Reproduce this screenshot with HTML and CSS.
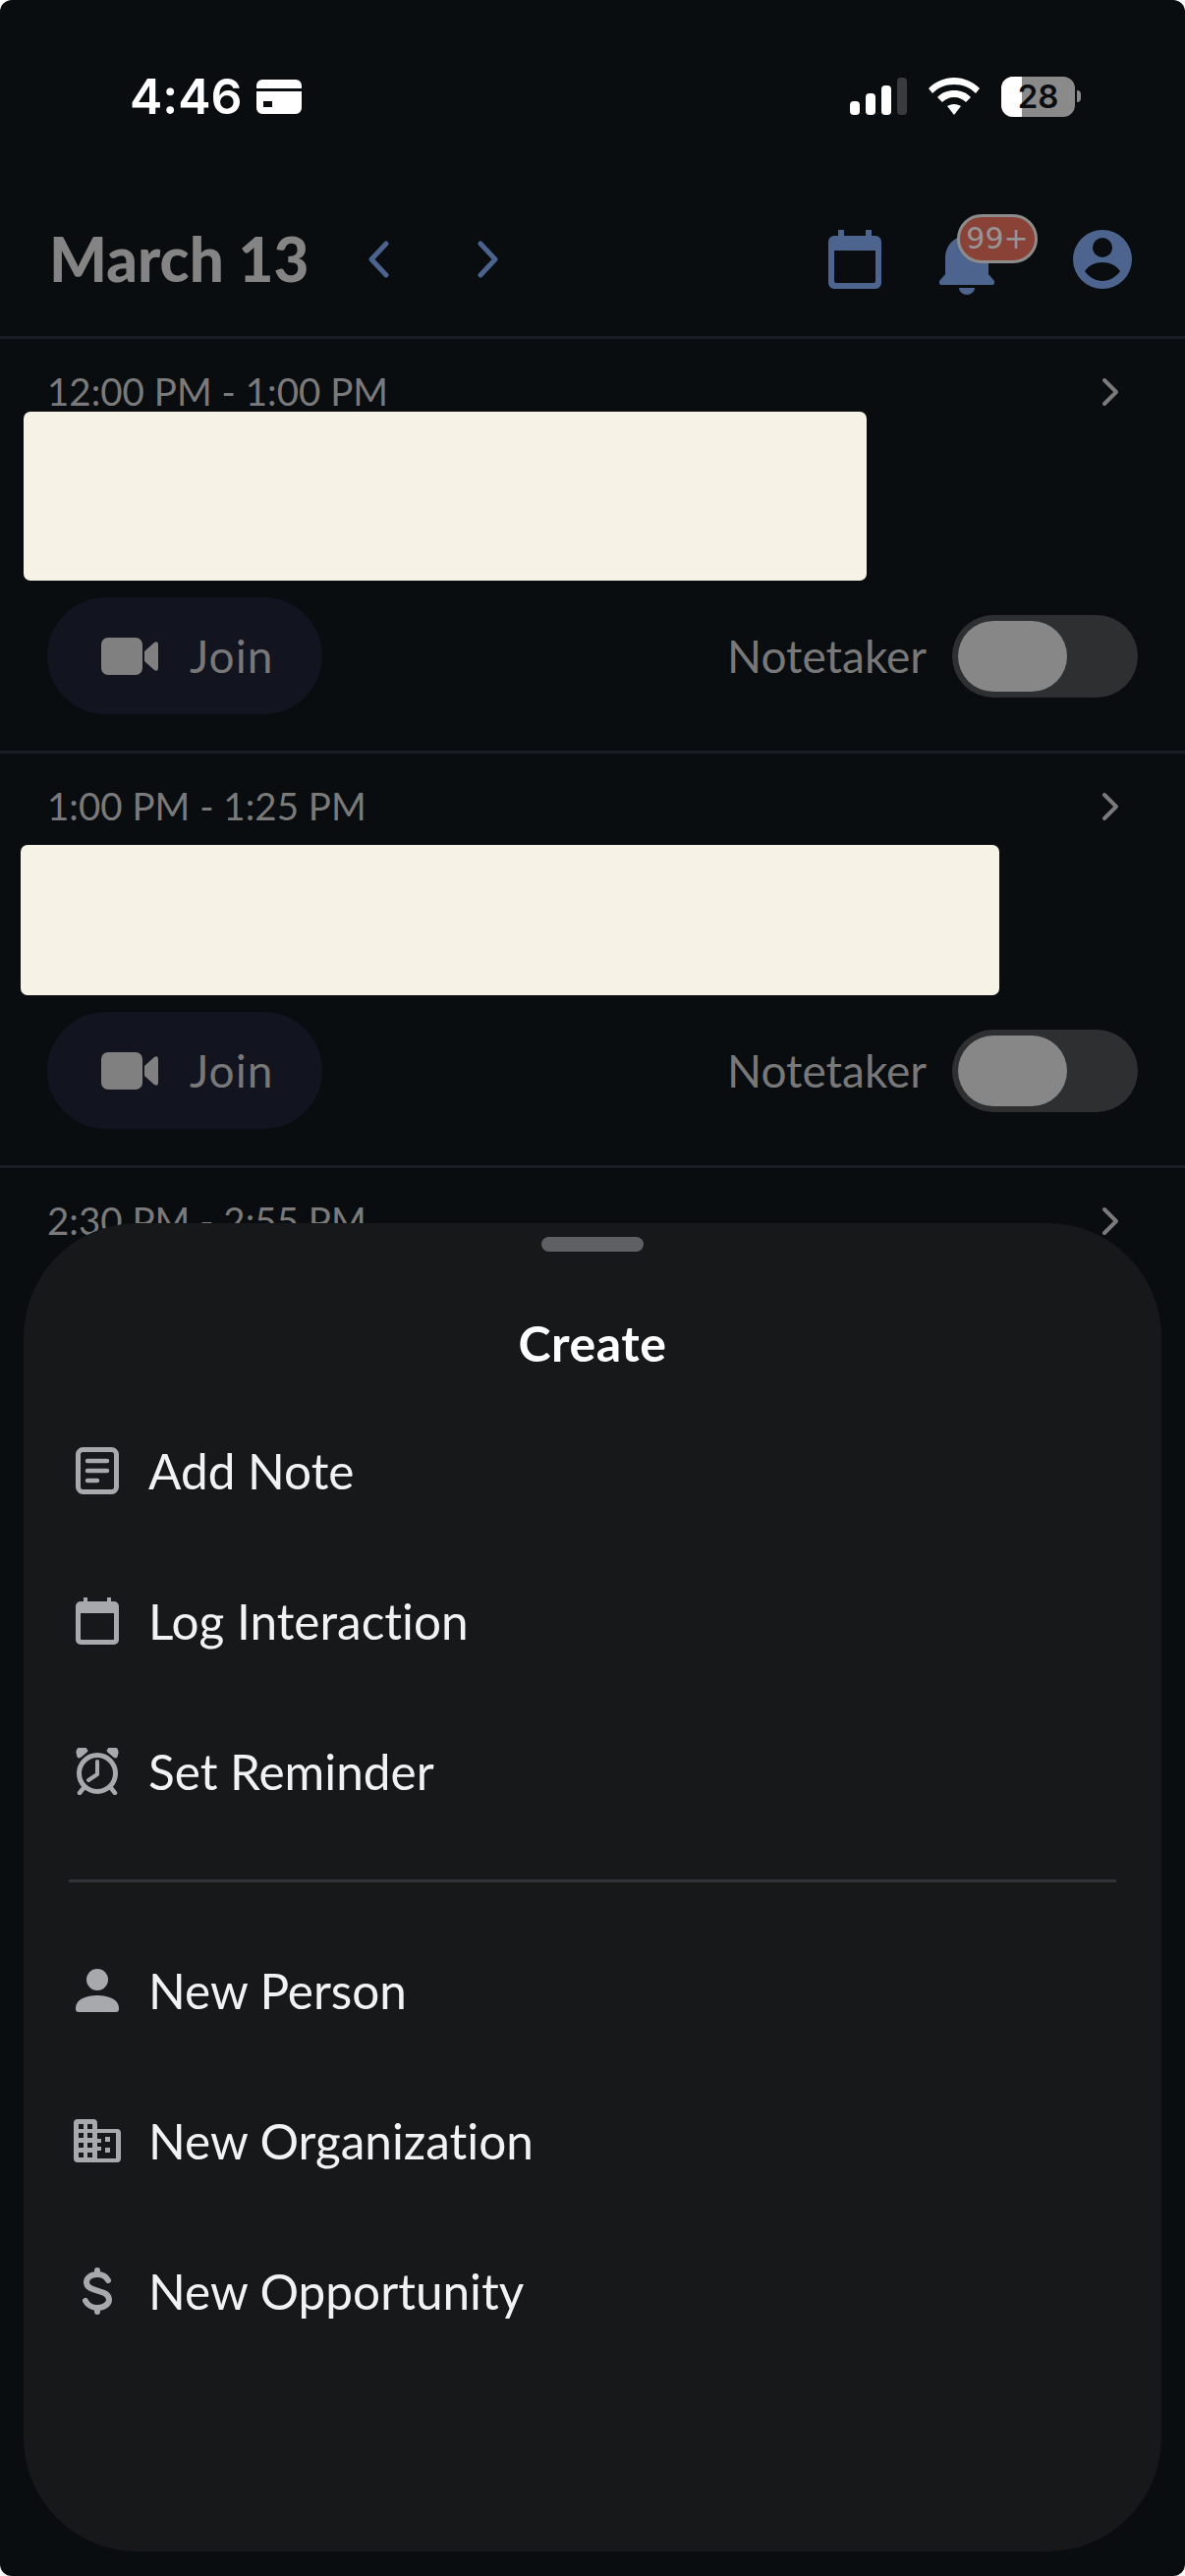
FILE: index.html
```html
<!DOCTYPE html>
<html lang="en">

<head>
    <meta charset="UTF-8">
    <meta name="viewport" content="width=device-width, initial-scale=1.0">
    <title>Calendar</title>
    <link rel="stylesheet" href="styles.css">
</head>

<body>
    <div class="screen">
        <div class="status-bar">
            <div class="status-left">
                <span class="clock">4:46</span>
                <svg class="wallet" width="46" height="35" viewBox="0 0 46 35">
                    <path fill="#fff" fill-rule="evenodd" d="M6 0h34a6 6 0 0 1 6 6v3H0V6a6 6 0 0 1 6-6zM0 12h46v17a6 6 0 0 1-6 6H6a6 6 0 0 1-6-6zM7 22v6h9v-6z"/>
                </svg>
            </div>
            <div class="status-right">
                <svg width="58" height="38" viewBox="0 0 58 38">
                    <rect x="0" y="24" width="10" height="14" rx="4" fill="#fff"/>
                    <rect x="16" y="16" width="10" height="22" rx="4" fill="#fff"/>
                    <rect x="32" y="8" width="10" height="30" rx="4" fill="#fff"/>
                    <rect x="48" y="0" width="10" height="38" rx="4" fill="#3a3b3d"/>
                </svg>
                <svg width="52" height="38" viewBox="0 0 52 38">
                    <path fill="#fff" d="M26 0c10 0 19 4 26 11l-4 5c-6-6-13-9-22-9S10 10 4 16l-4-5C7 4 16 0 26 0z"/>
                    <path fill="#fff" d="M26 13c7 0 12 2 17 7l-5 5c-3-3-7-5-12-5s-9 2-12 5l-5-5c5-5 10-7 17-7z"/>
                    <path fill="#fff" d="M26 27c3 0 5 1 7 2l-7 9-7-9c2-1 4-2 7-2z"/>
                </svg>
                <div class="battery">
                    <div class="battery-body">
                        <div class="battery-fill"></div>
                        <span class="battery-num">28</span>
                    </div>
                    <div class="battery-nub"></div>
                </div>
            </div>
        </div>

        <div class="top-bar">
            <div class="date-nav">
                <span class="date">March 13</span>
                <svg class="nav-prev" width="24" height="38" viewBox="0 0 24 38">
                    <path d="M20 3L5 19l15 16" fill="none" stroke="#4b638f" stroke-width="5" stroke-linecap="round" stroke-linejoin="round"/>
                </svg>
                <svg class="nav-next" width="24" height="38" viewBox="0 0 24 38">
                    <path d="M4 3l15 16L4 35" fill="none" stroke="#4b638f" stroke-width="5" stroke-linecap="round" stroke-linejoin="round"/>
                </svg>
            </div>
            <div class="top-icons">
                <svg width="54" height="60" viewBox="0 0 54 60">
                    <path fill="#4d648f" fill-rule="evenodd" d="M10 0h6v6h22V0h6v6h4a6 6 0 0 1 6 6v42a6 6 0 0 1-6 6H6a6 6 0 0 1-6-6V12a6 6 0 0 1 6-6h4zM6 21v31a2 2 0 0 0 2 2h38a2 2 0 0 0 2-2V21z"/>
                </svg>
                <div class="bell">
                    <svg width="56" height="60" viewBox="0 0 56 60">
                        <path fill="#4d648f" d="M28 0c-13 0-22 10-22 23v16L0 46v2a2 2 0 0 0 2 2h52a2 2 0 0 0 2-2v-2l-6-7V23C50 10 41 0 28 0z"/>
                        <path fill="#4d648f" d="M20 53h16c0 4-4 7-8 7s-8-3-8-7z"/>
                    </svg>
                    <span class="badge">99+</span>
                </div>
                <svg width="60" height="60" viewBox="0 0 60 60">
                    <path fill="#4d648f" fill-rule="evenodd" d="M30 0a30 30 0 1 1 0 60a30 30 0 0 1 0-60zM30 8a10 10 0 1 0 0 20a10 10 0 0 0 0-20zM12 42c4 6 11 10 18 10s14-4 18-10c-4-6-11-9-18-9s-14 3-18 9z"/>
                </svg>
            </div>
        </div>

        <div class="event">
            <div class="event-head">
                <span class="event-time">12:00 PM - 1:00 PM</span>
                <svg class="chevron" width="20" height="30" viewBox="0 0 20 30">
                    <path d="M4 3l12 12L4 27" fill="none" stroke="#7a7a7a" stroke-width="4" stroke-linecap="round" stroke-linejoin="round"/>
                </svg>
            </div>
            <div class="redacted redacted-a"></div>
            <div class="event-actions">
                <div class="join">
                    <svg width="58" height="38" viewBox="0 0 58 38">
                        <path fill="#808080" d="M7 0h28a7 7 0 0 1 7 7v24a7 7 0 0 1-7 7H7a7 7 0 0 1-7-7V7a7 7 0 0 1 7-7zM44 14l10-9q4-2 4 2v24q0 4-4 2L44 24z"/>
                    </svg>
                    <span>Join</span>
                </div>
                <div class="notetaker">
                    <span>Notetaker</span>
                    <div class="toggle"><div class="thumb"></div></div>
                </div>
            </div>
        </div>

        <div class="event">
            <div class="event-head">
                <span class="event-time">1:00 PM - 1:25 PM</span>
                <svg class="chevron" width="20" height="30" viewBox="0 0 20 30">
                    <path d="M4 3l12 12L4 27" fill="none" stroke="#7a7a7a" stroke-width="4" stroke-linecap="round" stroke-linejoin="round"/>
                </svg>
            </div>
            <div class="redacted redacted-b"></div>
            <div class="event-actions">
                <div class="join">
                    <svg width="58" height="38" viewBox="0 0 58 38">
                        <path fill="#808080" d="M7 0h28a7 7 0 0 1 7 7v24a7 7 0 0 1-7 7H7a7 7 0 0 1-7-7V7a7 7 0 0 1 7-7zM44 14l10-9q4-2 4 2v24q0 4-4 2L44 24z"/>
                    </svg>
                    <span>Join</span>
                </div>
                <div class="notetaker">
                    <span>Notetaker</span>
                    <div class="toggle"><div class="thumb"></div></div>
                </div>
            </div>
        </div>

        <div class="event event-last">
            <div class="event-head">
                <span class="event-time">2:30 PM - 2:55 PM</span>
                <svg class="chevron" width="20" height="30" viewBox="0 0 20 30">
                    <path d="M4 3l12 12L4 27" fill="none" stroke="#7a7a7a" stroke-width="4" stroke-linecap="round" stroke-linejoin="round"/>
                </svg>
            </div>
        </div>

        <div class="sheet">
            <div class="handle"></div>
            <div class="sheet-title">Create</div>

            <div class="menu-item">
                <svg width="44" height="48" viewBox="0 0 44 48">
                    <rect x="2.500" y="2.500" width="39" height="43" rx="5" fill="none" stroke="#a8a9ac" stroke-width="5"/>
                    <path d="M12 14h20M12 24h20M12 34h10" stroke="#a8a9ac" stroke-width="4.500" stroke-linecap="round"/>
                </svg>
                <span>Add Note</span>
            </div>
            <div class="menu-item">
                <svg width="44" height="48" viewBox="0 0 44 48">
                    <path fill="#a8a9ac" fill-rule="evenodd" d="M8 0h4v4h20V0h4v4h3a5 5 0 0 1 5 5v34a5 5 0 0 1-5 5H5a5 5 0 0 1-5-5V9a5 5 0 0 1 5-5h3zM5 16v26a1 1 0 0 0 1 1h32a1 1 0 0 0 1-1V16z"/>
                </svg>
                <span>Log Interaction</span>
            </div>
            <div class="menu-item">
                <svg width="44" height="48" viewBox="0 0 44 48">
                    <circle cx="22" cy="26" r="18.500" fill="none" stroke="#a8a9ac" stroke-width="5"/>
                    <path d="M22 14v13l-9 6" fill="none" stroke="#a8a9ac" stroke-width="4" stroke-linecap="round" stroke-linejoin="round"/>
                    <path fill="#a8a9ac" d="M1 7a6 6 0 0 1 11-5c1 1 0 2-1 3L5 10C3 11 1 10 1 7zM43 7a6 6 0 0 0-11-5c-1 1 0 2 1 3l6 5c2 1 4 0 4-3z"/>
                    <path d="M8 41l-4 5M36 41l4 5" stroke="#a8a9ac" stroke-width="4.500" stroke-linecap="round"/>
                </svg>
                <span>Set Reminder</span>
            </div>

            <div class="menu-divider"></div>

            <div class="menu-item">
                <svg width="44" height="44" viewBox="0 0 44 44">
                    <circle cx="22" cy="11" r="11" fill="#a8a9ac"/>
                    <path fill="#a8a9ac" d="M0 40c0-9 11-13 22-13s22 4 22 13v1a3 3 0 0 1-3 3H3a3 3 0 0 1-3-3z"/>
                </svg>
                <span>New Person</span>
            </div>
            <div class="menu-item">
                <svg width="48" height="44" viewBox="0 0 48 44">
                    <path fill="#a8a9ac" fill-rule="evenodd" d="M4 0h16a4 4 0 0 1 4 4v6h20a4 4 0 0 1 4 4v26a4 4 0 0 1-4 4H4a4 4 0 0 1-4-4V4a4 4 0 0 1 4-4zM5 5v5h5V5zM14 5v5h5V5zM5 14v5h5v-5zM14 14v5h5v-5zM5 24v5h5v-5zM14 24v5h5v-5zM5 34v5h5v-5zM14 34v5h5v-5zM24 14v6h4v4h-4v4h4v4h-4v8h19V14zM32 18h5v5h-5zM32 29h5v5h-5z"/>
                </svg>
                <span>New Organization</span>
            </div>
            <div class="menu-item">
                <svg width="44" height="48" viewBox="0 0 44 48">
                    <path d="M33 13c-2-4-6-6-11-6-7 0-11 4-11 8 0 11 23 6 23 18 0 4-5 8-12 8-5 0-10-3-12-7M22 3v4M22 41v4" fill="none" stroke="#a8a9ac" stroke-width="6" stroke-linecap="round"/>
                </svg>
                <span>New Opportunity</span>
            </div>
        </div>
    </div>
</body>

</html>
```

FILE: styles.css
```css
* {
    box-sizing: border-box;
}

html,
body {
    margin: 0;
    padding: 0;
}

body {
    width: 1206px;
    height: 2622px;
    overflow: hidden;
    background-color: #fff;
    font-family: Lato, "Open Sans", sans-serif;
    font-variant-ligatures: none;
}

.screen {
    position: relative;
    width: 1206px;
    height: 2622px;
    overflow: hidden;
    background-color: #0a0d0f;
    border-radius: 12px;
}

.status-bar {
    display: flex;
    justify-content: space-between;
    align-items: center;
    height: 196px;
    padding: 0 106px 0 132px;
}

.status-left {
    display: flex;
    align-items: center;
    gap: 14px;
}

.clock {
    font-family: Inter, sans-serif;
    font-size: 50px;
    font-weight: 600;
    color: #fff;
}

.status-right {
    display: flex;
    align-items: center;
    gap: 22px;
}

.battery {
    display: flex;
    align-items: center;
    gap: 2px;
}

.battery-body {
    position: relative;
    display: flex;
    align-items: center;
    justify-content: center;
    width: 75px;
    height: 41px;
    overflow: hidden;
    background-color: #8a8a8a;
    border-radius: 12px;
}

.battery-fill {
    position: absolute;
    left: 0;
    top: 0;
    bottom: 0;
    width: 21px;
    background-color: #fff;
}

.battery-num {
    position: relative;
    font-family: Inter, sans-serif;
    font-size: 33px;
    font-weight: 600;
    color: #0a0d0f;
}

.battery-nub {
    width: 4px;
    height: 12px;
    background-color: #8a8a8a;
    border-radius: 0 4px 4px 0;
}

.top-bar {
    display: flex;
    justify-content: space-between;
    align-items: center;
    height: 149px;
    padding: 0 54px 10px 50px;
    border-bottom: 3px solid #1a1c26;
}

.date-nav {
    display: flex;
    align-items: center;
}

.date {
    width: 323px;
    margin-top: -2px;
    font-size: 62px;
    font-weight: 900;
    color: #848484;
}

.nav-next {
    margin-left: 88px;
}

.top-icons {
    display: flex;
    align-items: center;
    gap: 59px;
}

.bell {
    position: relative;
    display: flex;
    margin-top: 12px;
    margin-right: 21px;
}

.badge {
    position: absolute;
    left: 18px;
    top: -22px;
    width: 82px;
    height: 50px;
    text-align: center;
    line-height: 44px;
    font-family: "DejaVu Sans", sans-serif;
    font-size: 30px;
    color: #969696;
    background-color: #8a4236;
    border: 3px solid #8c8c8c;
    border-radius: 25px;
}

.event {
    height: 422px;
    padding: 28px 48px 0;
    border-bottom: 3px solid #1a1c26;
}

.event-last {
    border-bottom: none;
}

.event-head {
    display: flex;
    justify-content: space-between;
    align-items: center;
    height: 50px;
    padding-right: 18px;
}

.chevron {
    margin-top: 2px;
}

.event-time {
    font-size: 38.5px;
    color: #7a7a7a;
}

.redacted {
    background-color: #f6f2e6;
    border-radius: 7px;
}

.redacted-a {
    width: 858px;
    height: 172px;
    margin: -4px 0 0 -24px;
}

.redacted-b {
    width: 996px;
    height: 153px;
    margin: 15px 0 0 -27px;
}

.event-actions {
    display: flex;
    justify-content: space-between;
    align-items: center;
    height: 119px;
    margin-top: 17px;
}

.join {
    display: flex;
    align-items: center;
    gap: 32px;
    width: 280px;
    height: 119px;
    padding-left: 55px;
    font-size: 46px;
    letter-spacing: 1px;
    color: #787878;
    background-color: #12141f;
    border-radius: 60px;
}

.notetaker {
    display: flex;
    align-items: center;
    gap: 26px;
    font-size: 46px;
    color: #787878;
}

.toggle {
    width: 189px;
    height: 84px;
    padding: 6px;
    background-color: #2e2f31;
    border-radius: 42px;
}

.thumb {
    width: 111px;
    height: 72px;
    background-color: #878787;
    border-radius: 36px;
}

.sheet {
    position: absolute;
    left: 24px;
    top: 1245px;
    width: 1158px;
    height: 1352px;
    padding: 14px 46px 0;
    background-color: #16181a;
    border-radius: 116px;
}

.handle {
    width: 104px;
    height: 15px;
    margin: 0 auto;
    background-color: #5f6064;
    border-radius: 8px;
}

.sheet-title {
    height: 64px;
    margin-top: 61px;
    margin-bottom: 21px;
    text-align: center;
    line-height: 64px;
    font-size: 50px;
    font-weight: 700;
    letter-spacing: 0.5px;
    color: #fff;
}

.menu-item {
    display: flex;
    align-items: center;
    height: 153px;
    font-size: 49.5px;
    color: #f2f2f2;
}

.menu-item svg {
    width: 50px;
    margin-left: 4px;
    margin-right: 27px;
}

.menu-divider {
    height: 3px;
    margin: 34px 0 33px;
    background-color: #2f3236;
}
```
